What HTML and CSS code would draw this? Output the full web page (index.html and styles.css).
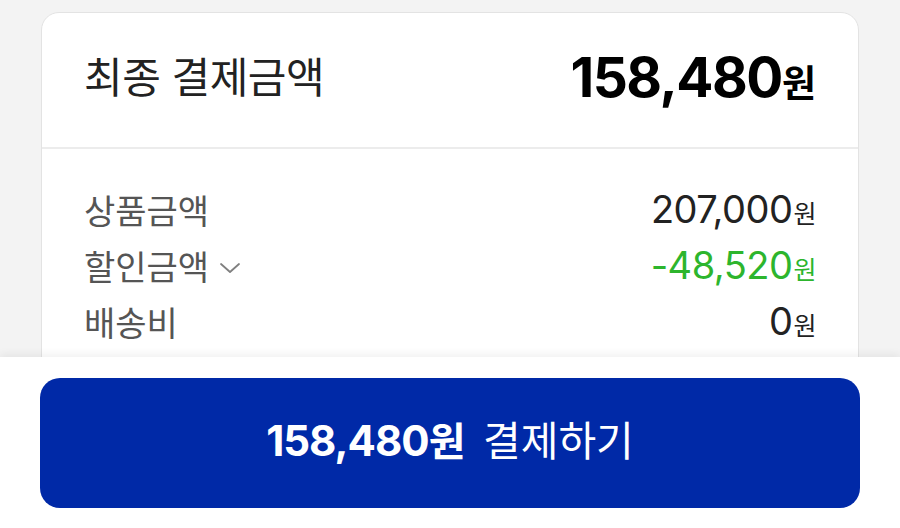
FILE: index.html
```html
<!DOCTYPE html>
<html lang="ko">
<head>
    <meta charset="UTF-8">
    <meta name="viewport" content="width=device-width, initial-scale=1.0">
    <title>주문 결제</title>
    <link rel="stylesheet" href="styles.css">
</head>
<body>

<div class="page">
    <div class="summary">
        <div class="summary-head">
            <h2>최종 결제금액</h2>
            <p class="total">158,480<span class="won">원</span></p>
        </div>

        <ul class="lines">
            <li>
                <span class="label">상품금액</span>
                <span class="price">207,000<span class="won">원</span></span>
            </li>
            <li>
                <span class="label">할인금액
                    <svg class="chevron" width="22" height="14" viewBox="0 0 22 14">
                        <path d="M2 3 L11 11 L20 3" fill="none" stroke="#808080" stroke-width="1.8" stroke-linecap="round" stroke-linejoin="round"/>
                    </svg>
                </span>
                <span class="price discount">-48,520<span class="won">원</span></span>
            </li>
            <li>
                <span class="label">배송비</span>
                <span class="price">0<span class="won">원</span></span>
            </li>
        </ul>
    </div>
</div>

<div class="pay-bar">
    <button class="pay-btn"><b>158,480<span class="won">원</span></b> 결제하기</button>
</div>

</body>
</html>
```

FILE: styles.css
```css
body {
    font-family: "Noto Sans CJK KR", sans-serif;
    margin: 0;
    padding: 0;
    background-color: #f3f3f3;
    color: #222;
    overflow: hidden;
}
.page {
    padding: 12px 41px 0;
}
.summary {
    background: white;
    border: 1px solid #e3e3e3;
    border-radius: 18px;
    height: 600px;
}
.summary-head {
    height: 128px;
    display: flex;
    align-items: center;
    justify-content: space-between;
    padding: 0 42px 6px;
    border-bottom: 2px solid #ececec;
}
.summary-head h2 {
    margin: 0 0 6px;
    font-size: 42px;
    font-weight: 400;
    letter-spacing: -0.5px;
    color: #222;
}
.total {
    margin: 0;
    font-family: Inter, "Noto Sans CJK KR", sans-serif;
    font-size: 55px;
    font-weight: 700;
    color: #000;
    letter-spacing: -1.5px;
}
.total .won {
    font-family: "Noto Sans CJK KR", sans-serif;
    font-size: 37px;
    letter-spacing: 0;
}
.lines {
    list-style: none;
    margin: 0;
    padding: 32px 42px 0;
}
.lines li {
    display: flex;
    justify-content: space-between;
    align-items: center;
    height: 56px;
}
.label {
    font-size: 34px;
    color: #555;
    display: flex;
    align-items: center;
    gap: 10px;
}
.chevron {
    margin-top: 6px;
}
.price {
    font-family: Inter, "Noto Sans CJK KR", sans-serif;
    font-size: 38px;
    color: #222;
    letter-spacing: -0.5px;
}
.price .won {
    font-family: "Noto Sans CJK KR", sans-serif;
    font-size: 25px;
    margin-left: 1px;
}
.discount {
    color: #2db52d;
}
.pay-bar {
    position: fixed;
    left: 0;
    right: 0;
    bottom: 0;
    height: 150px;
    padding: 21px 40px 0;
    background: white;
    box-shadow: 0 -3px 8px rgba(0, 0, 0, 0.06);
}
.pay-btn {
    width: 100%;
    height: 130px;
    padding: 0 0 10px;
    border: none;
    border-radius: 20px;
    background: #0029a7;
    color: white;
    font-family: "Noto Sans CJK KR", sans-serif;
    font-size: 41px;
    font-weight: 400;
    cursor: pointer;
}
.pay-btn b {
    font-family: Inter, "Noto Sans CJK KR", sans-serif;
    font-size: 42px;
    font-weight: 700;
    letter-spacing: -1px;
    margin-right: 6px;
}
.pay-btn .won {
    font-family: "Noto Sans CJK KR", sans-serif;
    font-size: 40px;
    letter-spacing: 0;
}
```
